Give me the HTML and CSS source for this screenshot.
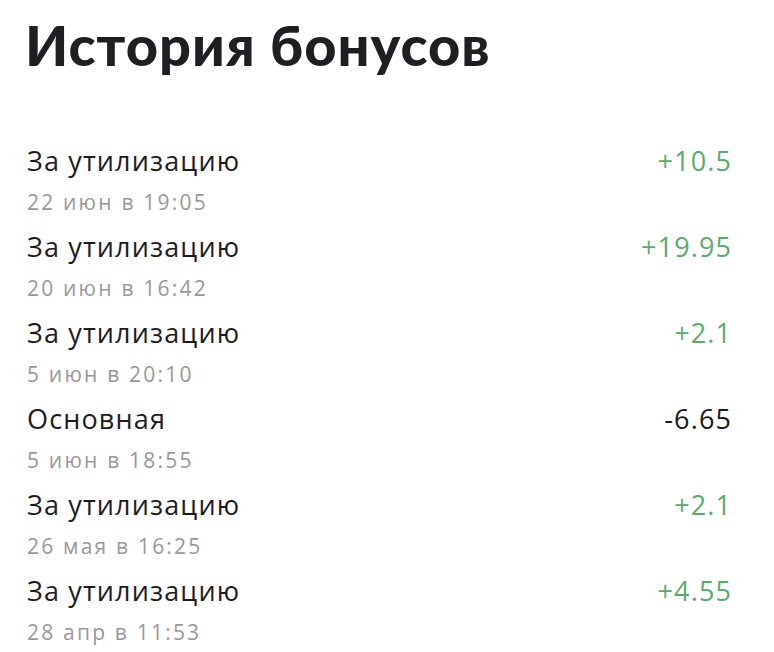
FILE: index.html
```html
<!DOCTYPE html>
<html lang="ru">
<head>
<meta charset="utf-8">
<title>История бонусов</title>
<link rel="stylesheet" href="styles.css">
</head>
<body>
<main class="page">
  <h1 class="page-title">История бонусов</h1>
  <ul class="history">
    <li class="entry">
      <div class="entry-main"><span class="entry-name">За утилизацию</span><span class="amount plus">+10.5</span></div>
      <div class="entry-date">22 июн в 19:05</div>
    </li>
    <li class="entry">
      <div class="entry-main"><span class="entry-name">За утилизацию</span><span class="amount plus">+19.95</span></div>
      <div class="entry-date">20 июн в 16:42</div>
    </li>
    <li class="entry">
      <div class="entry-main"><span class="entry-name">За утилизацию</span><span class="amount plus">+2.1</span></div>
      <div class="entry-date">5 июн в 20:10</div>
    </li>
    <li class="entry">
      <div class="entry-main"><span class="entry-name">Основная</span><span class="amount minus">-6.65</span></div>
      <div class="entry-date">5 июн в 18:55</div>
    </li>
    <li class="entry">
      <div class="entry-main"><span class="entry-name">За утилизацию</span><span class="amount plus">+2.1</span></div>
      <div class="entry-date">26 мая в 16:25</div>
    </li>
    <li class="entry">
      <div class="entry-main"><span class="entry-name">За утилизацию</span><span class="amount plus">+4.55</span></div>
      <div class="entry-date">28 апр в 11:53</div>
    </li>
  </ul>
</main>
</body>
</html>
```

FILE: styles.css
```css
html, body {
  margin: 0;
  padding: 0;
  background: #ffffff;
}

body {
  font-family: "Open Sans", Lato, "Liberation Sans", sans-serif;
  color: #1c1c1e;
}

.page {
  padding: 13px 43px 0 27px;
}

.page-title {
  margin: 0 0 68px -2px;
  font-family: Lato, "Open Sans", sans-serif;
  font-size: 56px;
  line-height: 64px;
  font-weight: 900;
  letter-spacing: 1px;
  color: #1f1f23;
}

.history {
  list-style: none;
  margin: 0;
  padding: 0;
}

.entry {
  display: flex;
  flex-direction: column;
  gap: 13px;
  padding-bottom: 17px;
}

.entry-main {
  display: flex;
  justify-content: space-between;
  align-items: baseline;
  font-size: 27px;
  line-height: 32px;
  letter-spacing: 1.15px;
}

.entry-name {
  color: #1c1c1e;
}

.amount {
  margin-right: -1.15px;
}

.amount.plus {
  color: #5aab6c;
}

.amount.minus {
  color: #1c1c1e;
}

.entry-date {
  font-size: 21px;
  line-height: 24px;
  letter-spacing: 2.2px;
  color: #999999;
}
```
